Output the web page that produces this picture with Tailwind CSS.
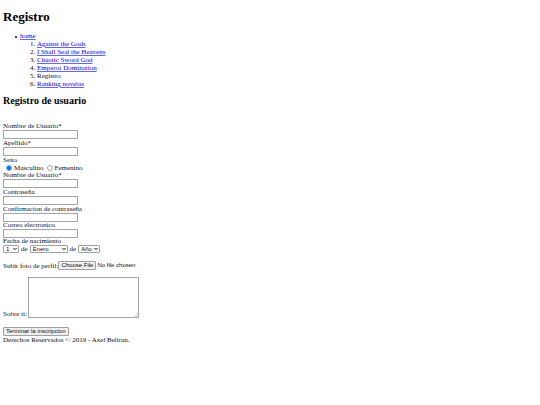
<!DOCTYPE html>
<html lang="es">
<head>
  <meta charset="UTF-8" />
  <meta name="viewport" content="width=device-width, initial-scale=1.0" />
  <title>Registro</title>
  <script src="https://cdn.jsdelivr.net/npm/@tailwindcss/browser@4"></script>
</head>
<body class="bg-white text-[#111] font-['Liberation_Serif',serif] text-[7px] leading-[8px] px-[3px] py-[9px]">
  <!-- Cabecera -->
  <header>
    <h1 class="text-[13px] leading-4 font-bold text-black">Registro</h1>
  </header>

  <!-- Menu -->
  <nav class="mt-[7px]">
    <ul class="pl-3">
      <li class="flex">
        <span class="size-[2px] mt-1 mr-[3px] rounded-full bg-black"></span>
        <div>
          <a href="#" class="text-[#0000ee] underline decoration-[#0000ee]/60">home</a>
          <ol class="list-decimal pl-[17px]">
            <li><a href="#" class="text-[#0000ee] underline decoration-[#0000ee]/60">Against the Gods</a></li>
            <li><a href="#" class="text-[#0000ee] underline decoration-[#0000ee]/60">I Shall Seal the Heavens</a></li>
            <li><a href="#" class="text-[#0000ee] underline decoration-[#0000ee]/60">Chaotic Sword God</a></li>
            <li><a href="#" class="text-[#0000ee] underline decoration-[#0000ee]/60">Emperor Domination</a></li>
            <li>Registro</li>
            <li><a href="#" class="text-[#0000ee] underline decoration-[#0000ee]/60">Ranking novelas</a></li>
          </ol>
        </div>
      </li>
    </ul>
  </nav>

  <!-- Formulario -->
  <main class="mt-[7px]">
    <h2 class="text-[10px] leading-3 font-bold text-black">Registro de usuario</h2>
    <form class="mt-[15px]">
      <label for="nombre" class="block">Nombre de Usuario*</label>
      <input type="text" id="nombre" class="block w-[75px] h-[9px] border border-[#a5a5a5] px-px text-[6px]">
      <label for="apellido" class="block">Apellido*</label>
      <input type="text" id="apellido" class="block w-[75px] h-[9px] border border-[#a5a5a5] px-px text-[6px]">

      <fieldset>
        <legend>Sexo</legend>
        <div class="flex items-center h-[7px] pl-[3px]">
          <input type="radio" id="masculino" name="sexo" checked class="appearance-none size-[6px] rounded-full border border-[#a5a5a5] checked:border-[#7ab4f7] checked:bg-[#0075ff]">
          <label for="masculino" class="ml-[2px]">Masculino</label>
          <input type="radio" id="femenino" name="sexo" class="appearance-none ml-[3px] size-[6px] rounded-full border border-[#a5a5a5] checked:border-[#7ab4f7] checked:bg-[#0075ff]">
          <label for="femenino" class="ml-[2px]">Femenino</label>
        </div>
      </fieldset>

      <label for="usuario" class="block">Nombre de Usuario*</label>
      <input type="text" id="usuario" class="block w-[75px] h-[9px] border border-[#a5a5a5] px-px text-[6px]">
      <label for="clave" class="block">Contraseña</label>
      <input type="password" id="clave" class="block w-[75px] h-[9px] border border-[#a5a5a5] px-px text-[6px]">
      <label for="clave2" class="block">Confirmacion de contraseña</label>
      <input type="password" id="clave2" class="block w-[75px] h-[9px] border border-[#a5a5a5] px-px text-[6px]">
      <label for="correo" class="block leading-[7px]">Correo electronico</label>
      <input type="email" id="correo" class="block w-[75px] h-[9px] border border-[#a5a5a5] px-px text-[6px]">

      <!-- Fecha -->
      <label for="dia" class="block leading-[7px]">Fecha de nacimiento</label>
      <div class="flex items-center gap-px font-['Liberation_Sans',sans-serif] text-[6px]">
        <div class="relative">
          <select id="dia" class="block appearance-none w-4 h-2 leading-[6px] border border-[#a0a0a0] rounded-[1px] bg-white pl-[2px]">
            <option>1</option>
            <option>2</option>
            <option>3</option>
          </select>
          <svg class="absolute right-[2px] top-[2px] w-1 h-1 pointer-events-none" viewBox="0 0 4 4" fill="none" stroke="#111" stroke-width="1"><path d="M0.4 1 L2 2.7 L3.6 1"/></svg>
        </div>
        <span class="px-px font-['Liberation_Serif',serif] text-[7px]">de</span>
        <div class="relative">
          <select aria-label="Mes" class="block appearance-none w-[38px] h-2 leading-[6px] border border-[#a0a0a0] rounded-[1px] bg-white pl-[2px]">
            <option>Enero</option>
            <option>Febrero</option>
            <option>Marzo</option>
          </select>
          <svg class="absolute right-[2px] top-[2px] w-1 h-1 pointer-events-none" viewBox="0 0 4 4" fill="none" stroke="#111" stroke-width="1"><path d="M0.4 1 L2 2.7 L3.6 1"/></svg>
        </div>
        <span class="px-px font-['Liberation_Serif',serif] text-[7px]">de</span>
        <div class="relative">
          <select aria-label="Año" class="block appearance-none w-[22px] h-2 leading-[6px] border border-[#a0a0a0] rounded-[1px] bg-white pl-[2px]">
            <option>Año</option>
            <option>2018</option>
            <option>2019</option>
          </select>
          <svg class="absolute right-[2px] top-[2px] w-1 h-1 pointer-events-none" viewBox="0 0 4 4" fill="none" stroke="#111" stroke-width="1"><path d="M0.4 1 L2 2.7 L3.6 1"/></svg>
        </div>
      </div>

      <!-- Foto -->
      <div class="flex items-center mt-2">
        <label for="foto">Subir foto de perfil:</label>
        <input type="file" id="foto" class="h-[9px] font-['Liberation_Sans',sans-serif] text-[6px] leading-[7px] file:box-border file:h-[9px] file:mr-px file:px-[2px] file:border file:border-solid file:border-[#a0a0a0] file:rounded-[1px] file:bg-[#efefef] file:leading-[7px]">
      </div>

      <div class="flex items-end mt-[7px]">
        <label for="sobre" class="pr-px">Sobre ti:</label>
        <div class="relative">
          <textarea id="sobre" class="block resize-none w-[111px] h-[41px] border border-[#a5a5a5] p-px text-[6px]"></textarea>
          <svg class="absolute right-px bottom-px w-1 h-1 pointer-events-none" viewBox="0 0 4 4" stroke="#999" stroke-width="0.5"><path d="M0 4 L4 0 M2 4 L4 2"/></svg>
        </div>
      </div>

      <button type="submit" class="block mt-[9px] h-[9px] px-[2px] border border-[#a0a0a0] rounded-[1px] bg-[#efefef] font-['Liberation_Sans',sans-serif] text-[6px] leading-[7px]">Terminar la inscripcion</button>
    </form>
  </main>

  <footer>
    <p>Derechos Reservados © 2019 - Axel Beltran.</p>
  </footer>
</body>
</html>
